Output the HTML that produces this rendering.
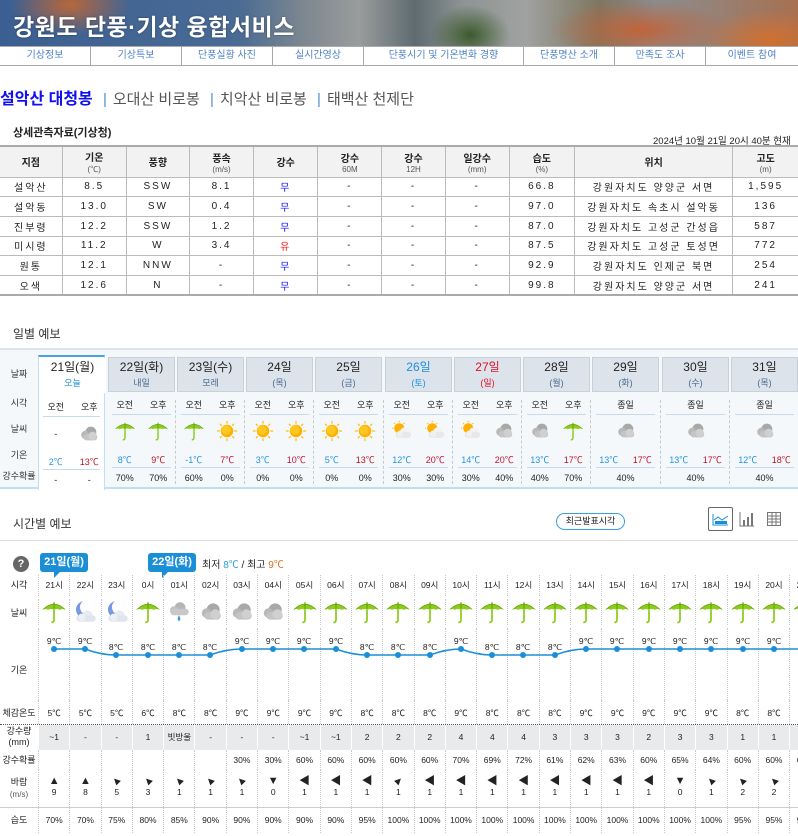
<!DOCTYPE html>
<html><head><meta charset="utf-8">
<style>
*{margin:0;padding:0;box-sizing:border-box}
body{width:798px;height:836px;overflow:hidden;background:#fff;font-family:"Liberation Sans","Noto Sans CJK KR","NanumGothic",sans-serif;color:#222;position:relative}
.abs{position:absolute}
#banner{left:0;top:0;width:798px;height:46px;background:
radial-gradient(ellipse 60px 30px at 70px 5px,#b8663a 0%,rgba(184,102,58,0) 100%),
radial-gradient(ellipse 90px 30px at 640px 30px,#c0643a 0%,rgba(192,100,58,0) 100%),
radial-gradient(ellipse 70px 30px at 770px 40px,#d07030 0%,rgba(208,112,48,0) 100%),
radial-gradient(ellipse 40px 30px at 470px 35px,#3d5a2c 0%,rgba(61,90,44,0) 100%),
linear-gradient(90deg,#3b5f92 0%,#4a6b94 30%,#7d8790 38%,#9a9c9c 45%,#5e6b70 52%,#8d9494 58%,#a0a2a0 66%,#7e7660 75%,#8a8d90 82%,#a87050 100%)}
#banner h1{position:absolute;left:13px;top:8px;color:#fff;font-size:23px;font-weight:bold;letter-spacing:0.5px;text-shadow:0 0 2px rgba(0,0,0,.4)}
#nav{left:0;top:46px;width:798px;height:20px;border-top:1px solid #aaa;border-bottom:1px solid #aaa;background:#fff}
#nav div{position:absolute;top:0;height:18px;line-height:18px;text-align:center;font-size:10px;color:#4f82c4;border-right:1px solid #aaa}
#mt{left:0;top:85px;font-size:15px}
#mt b{color:#1010f0;font-weight:bold;font-size:16px}
#mt span{color:#555}
#mt i{font-style:normal;color:#4a8fd0;margin:0 6px}
table.obs{position:absolute;left:0;top:145px;width:798px;border-collapse:collapse;font-size:10px}
table.obs th{background:#f2f2f2;height:31px;font-weight:bold;font-size:10px;border:1px solid #bbb;border-top:2px solid #aaa}
table.obs th small{display:block;font-weight:normal;font-size:8px;color:#555}
table.obs td{height:19.7px;text-align:center;border:1px solid #bbb;letter-spacing:2px}
table.obs tr td:first-child,table.obs tr th:first-child{border-left:none}
table.obs tr td:last-child,table.obs tr th:last-child{border-right:none}
table.obs tr:last-child td{border-bottom:2px solid #aaa}
.blue{color:#1010ff}.red{color:#ff1010}
.sec{font-size:12px;color:#333}
#day{left:0;top:348px;width:798px;height:141px;background:#f4f8fb;border-top:2px solid #dde3e8;border-bottom:2px solid #bfdff3}
.dl{position:absolute;left:0;width:38px;text-align:center;font-size:9px;color:#333}
.dc{position:absolute;top:6px;width:67px;height:132px}
.dh{position:absolute;left:0;top:1px;width:67px;height:35px;background:#dde3ea;border:1px solid #c8d0d8;text-align:center;font-size:12px;color:#222;line-height:15px;padding-top:2px}
.dh small{display:block;font-size:9px;color:#4a6a90;margin-top:1px}
.dc.today{background:#fff;border-top:2px solid #4aa3df;border-left:1px solid #bfdff3;border-right:1px solid #bfdff3;top:5px;height:135px}
.dc.today .dh{background:#fff;border:none}
.dc .r{position:absolute;left:0;width:67px;display:flex;justify-content:space-around;font-size:9px}
.dc .r span{width:33px;text-align:center}
.ln{position:absolute;left:4px;right:4px;height:1px;background:#c7dbe8}
.vl{position:absolute;left:-2px;top:44px;height:84px;border-left:1px dashed #c9c9c9}
.tb{color:#2196e0}.tr{color:#c0142a}
#hh{left:0;top:575px;width:830px}
.row{display:flex;position:relative}
.row .lb{width:38px;flex:none;text-align:center;font-size:9px;color:#222}
.row .c{width:31.3px;flex:none;text-align:center;font-size:8.5px;border-left:1px dotted #c8c8c8;color:#222}
svg{display:block}
.bub{position:absolute;height:19px;background:#1a8fd8;color:#fff;font-size:11px;font-weight:bold;border-radius:3px;text-align:center;line-height:19px}
.arr{display:inline-block;font-size:11px;line-height:12px}
</style></head><body>
<svg width="0" height="0" style="position:absolute">
<defs>
<symbol id="um" viewBox="0 0 24 24"><path d="M1 10 Q12 -1 23 10 Q20 8.5 17.5 10 Q15 8.5 12 10 Q9 8.5 6.5 10 Q4 8.5 1 10Z" fill="#8ccc1c"/><path d="M2 9.5 Q12 0 22 9.5" fill="none" stroke="#6aa80c" stroke-width="0.8"/><path d="M12 10 V19 Q12 22 9.5 21.5" fill="none" stroke="#8ccc1c" stroke-width="1.6"/><rect x="11.4" y="3" width="1.2" height="6" fill="#6aa80c"/></symbol>
<symbol id="cl" viewBox="0 0 24 24"><circle cx="14" cy="10" r="6" fill="#a8a8a8"/><circle cx="8" cy="13" r="4.5" fill="#b8b8b8"/><rect x="6" y="12" width="15" height="7" rx="3.5" fill="#c4c4c4"/><circle cx="16" cy="14" r="4.5" fill="#d0d0d0"/></symbol>
<symbol id="su" viewBox="0 0 24 24"><g stroke="#ffc000" stroke-width="1.3"><path d="M12 1V4M12 20V23M1 12H4M20 12H23M4.2 4.2L6.3 6.3M17.7 17.7L19.8 19.8M4.2 19.8L6.3 17.7M17.7 6.3L19.8 4.2"/></g><circle cx="12" cy="12" r="6.8" fill="#ffb000"/><circle cx="11" cy="11" r="5" fill="#ffc820"/></symbol>
<symbol id="sc" viewBox="0 0 24 24"><circle cx="9" cy="9" r="5.5" fill="#ffb000"/><g stroke="#ffc000" stroke-width="1.2"><path d="M9 1V2.5M1 9H2.5M3.3 3.3L4.4 4.4M14.7 3.3L13.6 4.4"/></g><circle cx="15" cy="13" r="5" fill="#f2f2f2"/><rect x="5" y="13" width="17" height="6.5" rx="3.2" fill="#e8e8e8"/><circle cx="10" cy="15" r="3.5" fill="#f0f0f0"/></symbol>
<symbol id="mc" viewBox="0 0 24 24"><path d="M10 2 A8 8 0 1 0 19 13 A6.5 6.5 0 1 1 10 2Z" fill="#7a9ae0"/><circle cx="14" cy="15" r="4.5" fill="#e6eaf2"/><rect x="4" y="15" width="18" height="6" rx="3" fill="#dfe4ee"/><circle cx="9" cy="17" r="3.5" fill="#eceff5"/></symbol>
<symbol id="rc" viewBox="0 0 24 24"><circle cx="13" cy="8" r="5" fill="#b4b4b4"/><circle cx="7.5" cy="10.5" r="3.8" fill="#c2c2c2"/><rect x="4" y="9" width="17" height="6" rx="3" fill="#c8c8c8"/><path d="M12 15 Q9.5 19 12 20.5 Q14.5 19 12 15Z" fill="#3a9ae0"/></symbol>
</defs></svg>

<div id="banner" class="abs"><h1>강원도 단풍·기상 융합서비스</h1></div>
<div id="nav" class="abs">
<div style="left:0;width:91px">기상정보</div>
<div style="left:91px;width:91px">기상특보</div>
<div style="left:182px;width:91px">단풍실황 사진</div>
<div style="left:273px;width:91px">실시간영상</div>
<div style="left:364px;width:160px">단풍시기 및 기온변화 경향</div>
<div style="left:524px;width:91px">단풍명산 소개</div>
<div style="left:615px;width:91px">만족도 조사</div>
<div style="left:706px;width:92px;border-right:none">이벤트 참여</div>
</div>
<div id="mt" class="abs"><b>설악산 대청봉</b> <i>|</i><span>오대산 비로봉</span> <i>|</i><span>치악산 비로봉</span> <i>|</i><span>태백산 천제단</span></div>
<div class="abs" style="left:13px;top:124px;font-size:11px;font-weight:bold">상세관측자료(기상청)</div>
<div class="abs" style="left:653px;top:133px;font-size:9.5px">2024년 10월 21일 20시 40분 현재</div>
<table class="obs">
<colgroup><col style="width:62px"><col style="width:64px"><col style="width:63px"><col style="width:64px"><col style="width:64px"><col style="width:64px"><col style="width:63px"><col style="width:64px"><col style="width:65px"><col style="width:158px"><col style="width:65px"></colgroup>
<tr><th>지점</th><th>기온<small>(℃)</small></th><th>풍향</th><th>풍속<small>(m/s)</small></th><th>강수</th><th>강수<small>60M</small></th><th>강수<small>12H</small></th><th>일강수<small>(mm)</small></th><th>습도<small>(%)</small></th><th>위치</th><th>고도<small>(m)</small></th></tr>
<tr><td>설악산</td><td>8.5</td><td>SSW</td><td>8.1</td><td class="blue">무</td><td>-</td><td>-</td><td>-</td><td>66.8</td><td>강원자치도 양양군 서면</td><td>1,595</td></tr>
<tr><td>설악동</td><td>13.0</td><td>SW</td><td>0.4</td><td class="blue">무</td><td>-</td><td>-</td><td>-</td><td>97.0</td><td>강원자치도 속초시 설악동</td><td>136</td></tr>
<tr><td>진부령</td><td>12.2</td><td>SSW</td><td>1.2</td><td class="blue">무</td><td>-</td><td>-</td><td>-</td><td>87.0</td><td>강원자치도 고성군 간성읍</td><td>587</td></tr>
<tr><td>미시령</td><td>11.2</td><td>W</td><td>3.4</td><td class="red">유</td><td>-</td><td>-</td><td>-</td><td>87.5</td><td>강원자치도 고성군 토성면</td><td>772</td></tr>
<tr><td>원통</td><td>12.1</td><td>NNW</td><td>-</td><td class="blue">무</td><td>-</td><td>-</td><td>-</td><td>92.9</td><td>강원자치도 인제군 북면</td><td>254</td></tr>
<tr><td>오색</td><td>12.6</td><td>N</td><td>-</td><td class="blue">무</td><td>-</td><td>-</td><td>-</td><td>99.8</td><td>강원자치도 양양군 서면</td><td>241</td></tr>
</table>

<div class="abs sec" style="left:13px;top:325px">일별 예보</div>
<div id="day" class="abs">
<div class="dl" style="top:17px">날짜</div>
<div class="dl" style="top:46px">시각</div>
<div class="dl" style="top:72px">날씨</div>
<div class="dl" style="top:98px">기온</div>
<div class="dl" style="top:119px">강수확률</div>

<div class="dc today" style="left:38px"><div class="dh">21일(월)<small style="color:#1a8fd8">오늘</small></div>
<div class="r" style="top:43px"><span>오전</span><span>오후</span></div><div class="ln" style="top:59px"></div>
<div class="r" style="top:66px"><span style="line-height:22px">-</span><span><svg width="22" height="22" style="margin:auto"><use href="#cl"/></svg></span></div>
<div class="r" style="top:98px"><span class="tb">2℃</span><span class="tr">13℃</span></div><div class="ln" style="top:112px"></div>
<div class="r" style="top:118px"><span>-</span><span>-</span></div></div>

<div class="dc" style="left:108px"><div class="dh">22일(화)<small>내일</small></div>
<div class="r" style="top:42px"><span>오전</span><span>오후</span></div><div class="ln" style="top:58px"></div>
<div class="r" style="top:64px"><span><svg width="22" height="22" style="margin:auto"><use href="#um"/></svg></span><span><svg width="22" height="22" style="margin:auto"><use href="#um"/></svg></span></div>
<div class="r" style="top:97px"><span class="tb">8℃</span><span class="tr">9℃</span></div><div class="ln" style="top:111px"></div>
<div class="r" style="top:117px"><span>70%</span><span>70%</span></div></div>

<div class="dc" style="left:177px"><div class="vl"></div><div class="dh">23일(수)<small>모레</small></div>
<div class="r" style="top:42px"><span>오전</span><span>오후</span></div><div class="ln" style="top:58px"></div>
<div class="r" style="top:64px"><span><svg width="22" height="22" style="margin:auto"><use href="#um"/></svg></span><span><svg width="22" height="22" style="margin:auto"><use href="#su"/></svg></span></div>
<div class="r" style="top:97px"><span class="tb">-1℃</span><span class="tr">7℃</span></div><div class="ln" style="top:111px"></div>
<div class="r" style="top:117px"><span>60%</span><span>0%</span></div></div>

<div class="dc" style="left:246px"><div class="vl"></div><div class="dh">24일<small>(목)</small></div>
<div class="r" style="top:42px"><span>오전</span><span>오후</span></div><div class="ln" style="top:58px"></div>
<div class="r" style="top:64px"><span><svg width="22" height="22" style="margin:auto"><use href="#su"/></svg></span><span><svg width="22" height="22" style="margin:auto"><use href="#su"/></svg></span></div>
<div class="r" style="top:97px"><span class="tb">3℃</span><span class="tr">10℃</span></div><div class="ln" style="top:111px"></div>
<div class="r" style="top:117px"><span>0%</span><span>0%</span></div></div>

<div class="dc" style="left:315px"><div class="vl"></div><div class="dh">25일<small>(금)</small></div>
<div class="r" style="top:42px"><span>오전</span><span>오후</span></div><div class="ln" style="top:58px"></div>
<div class="r" style="top:64px"><span><svg width="22" height="22" style="margin:auto"><use href="#su"/></svg></span><span><svg width="22" height="22" style="margin:auto"><use href="#su"/></svg></span></div>
<div class="r" style="top:97px"><span class="tb">5℃</span><span class="tr">13℃</span></div><div class="ln" style="top:111px"></div>
<div class="r" style="top:117px"><span>0%</span><span>0%</span></div></div>

<div class="dc" style="left:385px"><div class="vl"></div><div class="dh"><span style="color:#1a8fe0">26일</span><small style="color:#1a8fe0">(토)</small></div>
<div class="r" style="top:42px"><span>오전</span><span>오후</span></div><div class="ln" style="top:58px"></div>
<div class="r" style="top:64px"><span><svg width="22" height="22" style="margin:auto"><use href="#sc"/></svg></span><span><svg width="22" height="22" style="margin:auto"><use href="#sc"/></svg></span></div>
<div class="r" style="top:97px"><span class="tb">12℃</span><span class="tr">20℃</span></div><div class="ln" style="top:111px"></div>
<div class="r" style="top:117px"><span>30%</span><span>30%</span></div></div>

<div class="dc" style="left:454px"><div class="vl"></div><div class="dh"><span style="color:#e0102a">27일</span><small style="color:#e0102a">(일)</small></div>
<div class="r" style="top:42px"><span>오전</span><span>오후</span></div><div class="ln" style="top:58px"></div>
<div class="r" style="top:64px"><span><svg width="22" height="22" style="margin:auto"><use href="#sc"/></svg></span><span><svg width="22" height="22" style="margin:auto"><use href="#cl"/></svg></span></div>
<div class="r" style="top:97px"><span class="tb">14℃</span><span class="tr">20℃</span></div><div class="ln" style="top:111px"></div>
<div class="r" style="top:117px"><span>30%</span><span>40%</span></div></div>

<div class="dc" style="left:523px"><div class="vl"></div><div class="dh">28일<small>(월)</small></div>
<div class="r" style="top:42px"><span>오전</span><span>오후</span></div><div class="ln" style="top:58px"></div>
<div class="r" style="top:64px"><span><svg width="22" height="22" style="margin:auto"><use href="#cl"/></svg></span><span><svg width="22" height="22" style="margin:auto"><use href="#um"/></svg></span></div>
<div class="r" style="top:97px"><span class="tb">13℃</span><span class="tr">17℃</span></div><div class="ln" style="top:111px"></div>
<div class="r" style="top:117px"><span>40%</span><span>70%</span></div></div>

<div class="dc" style="left:592px"><div class="vl"></div><div class="dh">29일<small>(화)</small></div>
<div class="r" style="top:42px"><span style="width:67px">종일</span></div><div class="ln" style="top:58px"></div>
<div class="r" style="top:64px"><span style="width:67px"><svg width="22" height="22" style="margin:auto"><use href="#cl"/></svg></span></div>
<div class="r" style="top:97px"><span class="tb">13℃</span><span class="tr">17℃</span></div><div class="ln" style="top:111px"></div>
<div class="r" style="top:117px"><span style="width:67px">40%</span></div></div>

<div class="dc" style="left:662px"><div class="vl"></div><div class="dh">30일<small>(수)</small></div>
<div class="r" style="top:42px"><span style="width:67px">종일</span></div><div class="ln" style="top:58px"></div>
<div class="r" style="top:64px"><span style="width:67px"><svg width="22" height="22" style="margin:auto"><use href="#cl"/></svg></span></div>
<div class="r" style="top:97px"><span class="tb">13℃</span><span class="tr">17℃</span></div><div class="ln" style="top:111px"></div>
<div class="r" style="top:117px"><span style="width:67px">40%</span></div></div>

<div class="dc" style="left:731px"><div class="vl"></div><div class="dh">31일<small>(목)</small></div>
<div class="r" style="top:42px"><span style="width:67px">종일</span></div><div class="ln" style="top:58px"></div>
<div class="r" style="top:64px"><span style="width:67px"><svg width="22" height="22" style="margin:auto"><use href="#cl"/></svg></span></div>
<div class="r" style="top:97px"><span class="tb">12℃</span><span class="tr">18℃</span></div><div class="ln" style="top:111px"></div>
<div class="r" style="top:117px"><span style="width:67px">40%</span></div></div>
</div>

<div class="abs sec" style="left:13px;top:515px">시간별 예보</div>
<div class="abs" style="left:556px;top:513px;width:69px;height:17px;border:1px solid #3aa0e0;border-radius:9px;font-size:9px;text-align:center;line-height:15px">최근발표시각</div>
<div class="abs" style="left:708px;top:507px;width:25px;height:24px;border:1px solid #666;border-radius:2px"><svg width="23" height="22" viewBox="0 0 23 22"><path d="M4 6V17H19" stroke="#1a8fd8" fill="none"/><path d="M5 12L9 9L13 12L19 8" stroke="#1a8fd8" fill="none"/><rect x="6" y="13" width="12" height="3" fill="#1a8fd8"/></svg></div>
<svg class="abs" style="left:739px;top:510px" width="16" height="18" viewBox="0 0 16 18"><path d="M1 2V16H15" stroke="#777" fill="none"/><rect x="4" y="10" width="2" height="6" fill="#777"/><rect x="8" y="7" width="2" height="9" fill="#777"/><rect x="12" y="3" width="2" height="13" fill="#777"/></svg>
<svg class="abs" style="left:767px;top:512px" width="14" height="14" viewBox="0 0 14 14"><path d="M0.5 0.5H13.5V13.5H0.5ZM0.5 4H13.5M0.5 7H13.5M0.5 10H13.5M5 0.5V13.5M9 0.5V13.5" stroke="#777" fill="none"/></svg>
<div class="abs" style="left:0;top:540px;width:798px;border-top:1px solid #ddd"></div>

<div class="abs" style="left:13px;top:556px;width:16px;height:16px;border-radius:8px;background:#666;color:#fff;font-size:11px;text-align:center;line-height:16px;font-weight:bold">?</div>
<div class="bub" style="left:40px;top:553px;width:48px">21일(월)<i style="position:absolute;left:14px;bottom:-6px;border-top:7px solid #1a8fd8;border-right:7px solid transparent"></i></div>
<div class="bub" style="left:148px;top:553px;width:48px">22일(화)<i style="position:absolute;left:14px;bottom:-6px;border-top:7px solid #1a8fd8;border-right:7px solid transparent"></i></div>
<div class="abs" style="left:202px;top:556px;font-size:10px">최저 <span style="color:#2aa0e0">8℃</span> / 최고 <span style="color:#e07020">9℃</span></div>

<div id="hh" class="abs">
<div class="row" style="height:21px;line-height:21px"><div class="lb">시각</div>
<div class="c">21시</div><div class="c">22시</div><div class="c">23시</div><div class="c">0시</div><div class="c">01시</div><div class="c">02시</div><div class="c">03시</div><div class="c">04시</div><div class="c">05시</div><div class="c">06시</div><div class="c">07시</div><div class="c">08시</div><div class="c">09시</div><div class="c">10시</div><div class="c">11시</div><div class="c">12시</div><div class="c">13시</div><div class="c">14시</div><div class="c">15시</div><div class="c">16시</div><div class="c">17시</div><div class="c">18시</div><div class="c">19시</div><div class="c">20시</div><div class="c">21시</div></div>
<div class="row" style="height:32px;align-items:center"><div class="lb">날씨</div>
<div class="c"><svg width="26" height="26" style="margin:auto"><use href="#um"/></svg></div>
<div class="c"><svg width="26" height="26" style="margin:auto"><use href="#mc"/></svg></div>
<div class="c"><svg width="26" height="26" style="margin:auto"><use href="#mc"/></svg></div>
<div class="c"><svg width="26" height="26" style="margin:auto"><use href="#um"/></svg></div>
<div class="c"><svg width="26" height="26" style="margin:auto"><use href="#rc"/></svg></div>
<div class="c"><svg width="26" height="26" style="margin:auto"><use href="#cl"/></svg></div>
<div class="c"><svg width="26" height="26" style="margin:auto"><use href="#cl"/></svg></div>
<div class="c"><svg width="26" height="26" style="margin:auto"><use href="#cl"/></svg></div>
<div class="c"><svg width="26" height="26" style="margin:auto"><use href="#um"/></svg></div>
<div class="c"><svg width="26" height="26" style="margin:auto"><use href="#um"/></svg></div>
<div class="c"><svg width="26" height="26" style="margin:auto"><use href="#um"/></svg></div>
<div class="c"><svg width="26" height="26" style="margin:auto"><use href="#um"/></svg></div>
<div class="c"><svg width="26" height="26" style="margin:auto"><use href="#um"/></svg></div>
<div class="c"><svg width="26" height="26" style="margin:auto"><use href="#um"/></svg></div>
<div class="c"><svg width="26" height="26" style="margin:auto"><use href="#um"/></svg></div>
<div class="c"><svg width="26" height="26" style="margin:auto"><use href="#um"/></svg></div>
<div class="c"><svg width="26" height="26" style="margin:auto"><use href="#um"/></svg></div>
<div class="c"><svg width="26" height="26" style="margin:auto"><use href="#um"/></svg></div>
<div class="c"><svg width="26" height="26" style="margin:auto"><use href="#um"/></svg></div>
<div class="c"><svg width="26" height="26" style="margin:auto"><use href="#um"/></svg></div>
<div class="c"><svg width="26" height="26" style="margin:auto"><use href="#um"/></svg></div>
<div class="c"><svg width="26" height="26" style="margin:auto"><use href="#um"/></svg></div>
<div class="c"><svg width="26" height="26" style="margin:auto"><use href="#um"/></svg></div>
<div class="c"><svg width="26" height="26" style="margin:auto"><use href="#um"/></svg></div>
<div class="c"><svg width="26" height="26" style="margin:auto"><use href="#um"/></svg></div></div>
<div class="row" style="height:72px"><div class="lb" style="padding-top:35px">기온</div>
<div class="c"></div><div class="c"></div><div class="c"></div><div class="c"></div><div class="c"></div><div class="c"></div><div class="c"></div><div class="c"></div><div class="c"></div><div class="c"></div><div class="c"></div><div class="c"></div><div class="c"></div><div class="c"></div><div class="c"></div><div class="c"></div><div class="c"></div><div class="c"></div><div class="c"></div><div class="c"></div><div class="c"></div><div class="c"></div><div class="c"></div><div class="c"></div><div class="c"></div>
<svg class="abs" style="left:0;top:0" width="830" height="72">
<path d="M54 21 L85 21 Q101 27 116 27 L210 27 Q226 21 242 21 L336 21 Q352 27 367 27 L430 27 Q446 21 461 21 Q477 27 492 27 L555 27 Q571 21 586 21 L830 21" fill="none" stroke="#1a8fd8" stroke-width="1.5"/>
<g fill="#1a8fd8"><circle cx="54" cy="21" r="3"/><circle cx="85" cy="21" r="3"/><circle cx="116" cy="27" r="3"/><circle cx="148" cy="27" r="3"/><circle cx="179" cy="27" r="3"/><circle cx="210" cy="27" r="3"/><circle cx="242" cy="21" r="3"/><circle cx="273" cy="21" r="3"/><circle cx="304" cy="21" r="3"/><circle cx="336" cy="21" r="3"/><circle cx="367" cy="27" r="3"/><circle cx="398" cy="27" r="3"/><circle cx="430" cy="27" r="3"/><circle cx="461" cy="21" r="3"/><circle cx="492" cy="27" r="3"/><circle cx="523" cy="27" r="3"/><circle cx="555" cy="27" r="3"/><circle cx="586" cy="21" r="3"/><circle cx="617" cy="21" r="3"/><circle cx="649" cy="21" r="3"/><circle cx="680" cy="21" r="3"/><circle cx="711" cy="21" r="3"/><circle cx="743" cy="21" r="3"/><circle cx="774" cy="21" r="3"/></g>
<g font-size="8.5" text-anchor="middle" fill="#222" font-family="Liberation Sans,sans-serif"><text x="54" y="16">9℃</text><text x="85" y="16">9℃</text><text x="116" y="22">8℃</text><text x="148" y="22">8℃</text><text x="179" y="22">8℃</text><text x="210" y="22">8℃</text><text x="242" y="16">9℃</text><text x="273" y="16">9℃</text><text x="304" y="16">9℃</text><text x="336" y="16">9℃</text><text x="367" y="22">8℃</text><text x="398" y="22">8℃</text><text x="430" y="22">8℃</text><text x="461" y="16">9℃</text><text x="492" y="22">8℃</text><text x="523" y="22">8℃</text><text x="555" y="22">8℃</text><text x="586" y="16">9℃</text><text x="617" y="16">9℃</text><text x="649" y="16">9℃</text><text x="680" y="16">9℃</text><text x="711" y="16">9℃</text><text x="743" y="16">9℃</text><text x="774" y="16">9℃</text></g></svg></div>
<div class="row" style="height:25px;line-height:26px;border-bottom:1px dotted #555"><div class="lb">체감온도</div>
<div class="c">5℃</div><div class="c">5℃</div><div class="c">5℃</div><div class="c">6℃</div><div class="c">8℃</div><div class="c">8℃</div><div class="c">9℃</div><div class="c">9℃</div><div class="c">9℃</div><div class="c">9℃</div><div class="c">8℃</div><div class="c">8℃</div><div class="c">8℃</div><div class="c">9℃</div><div class="c">8℃</div><div class="c">8℃</div><div class="c">8℃</div><div class="c">9℃</div><div class="c">9℃</div><div class="c">9℃</div><div class="c">9℃</div><div class="c">9℃</div><div class="c">8℃</div><div class="c">8℃</div><div class="c">8℃</div></div>
<div class="row" style="height:25px;line-height:25px;background:#e8eaeb"><div class="lb" style="background:#fff;line-height:11px;padding-top:1px">강수량<br>(mm)</div>
<div class="c" style="border-left:1px solid #fff">~1</div><div class="c" style="border-left:1px solid #fff">-</div><div class="c" style="border-left:1px solid #fff">-</div><div class="c" style="border-left:1px solid #fff">1</div><div class="c" style="border-left:1px solid #fff">빗방울</div><div class="c" style="border-left:1px solid #fff">-</div><div class="c" style="border-left:1px solid #fff">-</div><div class="c" style="border-left:1px solid #fff">-</div><div class="c" style="border-left:1px solid #fff">~1</div><div class="c" style="border-left:1px solid #fff">~1</div><div class="c" style="border-left:1px solid #fff">2</div><div class="c" style="border-left:1px solid #fff">2</div><div class="c" style="border-left:1px solid #fff">2</div><div class="c" style="border-left:1px solid #fff">4</div><div class="c" style="border-left:1px solid #fff">4</div><div class="c" style="border-left:1px solid #fff">4</div><div class="c" style="border-left:1px solid #fff">3</div><div class="c" style="border-left:1px solid #fff">3</div><div class="c" style="border-left:1px solid #fff">3</div><div class="c" style="border-left:1px solid #fff">2</div><div class="c" style="border-left:1px solid #fff">3</div><div class="c" style="border-left:1px solid #fff">3</div><div class="c" style="border-left:1px solid #fff">1</div><div class="c" style="border-left:1px solid #fff">1</div><div class="c" style="border-left:1px solid #fff">1</div></div>
<div class="row" style="height:20px;line-height:20px"><div class="lb">강수확률</div>
<div class="c"></div><div class="c"></div><div class="c"></div><div class="c"></div><div class="c"></div><div class="c"></div><div class="c">30%</div><div class="c">30%</div><div class="c">60%</div><div class="c">60%</div><div class="c">60%</div><div class="c">60%</div><div class="c">60%</div><div class="c">70%</div><div class="c">69%</div><div class="c">72%</div><div class="c">61%</div><div class="c">62%</div><div class="c">63%</div><div class="c">60%</div><div class="c">65%</div><div class="c">64%</div><div class="c">60%</div><div class="c">60%</div><div class="c">60%</div></div>
<div class="row" style="height:38px;border-bottom:1px solid #ccc"><div class="lb" style="padding-top:6px;line-height:12px">바람<br><span style="font-size:8px;color:#555">(m/s)</span></div>
<div class="c" style="padding-top:5px"><span class="arr">▲</span><br>9</div><div class="c" style="padding-top:5px"><span class="arr">▲</span><br>8</div><div class="c" style="padding-top:5px"><span class="arr" style="transform:rotate(-45deg)">▲</span><br>5</div><div class="c" style="padding-top:5px"><span class="arr" style="transform:rotate(-45deg)">▲</span><br>3</div><div class="c" style="padding-top:5px"><span class="arr" style="transform:rotate(-45deg)">▲</span><br>1</div><div class="c" style="padding-top:5px"><span class="arr" style="transform:rotate(-45deg)">▲</span><br>1</div><div class="c" style="padding-top:5px"><span class="arr" style="transform:rotate(-45deg)">▲</span><br>1</div><div class="c" style="padding-top:5px"><span class="arr">▼</span><br>0</div><div class="c" style="padding-top:5px"><span class="arr">◀</span><br>1</div><div class="c" style="padding-top:5px"><span class="arr">◀</span><br>1</div><div class="c" style="padding-top:5px"><span class="arr">◀</span><br>1</div><div class="c" style="padding-top:5px"><span class="arr" style="transform:rotate(45deg)">▲</span><br>1</div><div class="c" style="padding-top:5px"><span class="arr">◀</span><br>1</div><div class="c" style="padding-top:5px"><span class="arr">◀</span><br>1</div><div class="c" style="padding-top:5px"><span class="arr">◀</span><br>1</div><div class="c" style="padding-top:5px"><span class="arr">◀</span><br>1</div><div class="c" style="padding-top:5px"><span class="arr">◀</span><br>1</div><div class="c" style="padding-top:5px"><span class="arr">◀</span><br>1</div><div class="c" style="padding-top:5px"><span class="arr">◀</span><br>1</div><div class="c" style="padding-top:5px"><span class="arr">◀</span><br>1</div><div class="c" style="padding-top:5px"><span class="arr">▼</span><br>0</div><div class="c" style="padding-top:5px"><span class="arr" style="transform:rotate(-45deg)">▲</span><br>1</div><div class="c" style="padding-top:5px"><span class="arr" style="transform:rotate(-45deg)">▲</span><br>2</div><div class="c" style="padding-top:5px"><span class="arr" style="transform:rotate(-45deg)">▲</span><br>2</div><div class="c" style="padding-top:5px"><span class="arr" style="transform:rotate(-45deg)">▲</span><br>2</div></div>
<div class="row" style="height:25px;line-height:25px"><div class="lb">습도</div>
<div class="c">70%</div><div class="c">70%</div><div class="c">75%</div><div class="c">80%</div><div class="c">85%</div><div class="c">90%</div><div class="c">90%</div><div class="c">90%</div><div class="c">90%</div><div class="c">90%</div><div class="c">95%</div><div class="c">100%</div><div class="c">100%</div><div class="c">100%</div><div class="c">100%</div><div class="c">100%</div><div class="c">100%</div><div class="c">100%</div><div class="c">100%</div><div class="c">100%</div><div class="c">100%</div><div class="c">100%</div><div class="c">95%</div><div class="c">95%</div><div class="c">95%</div></div>
</div>
</body></html>
